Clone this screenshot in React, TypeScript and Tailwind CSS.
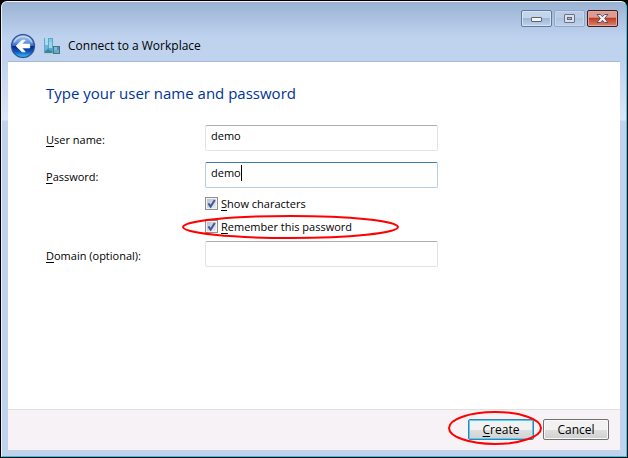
import { useState, type ReactNode } from 'react'
import clsx from 'clsx'

function BackIcon() {
  return (
    <svg width="26" height="26" viewBox="0 0 26 26" aria-hidden="true">
      <defs>
        <linearGradient id="orb" x1="0" y1="0" x2="0" y2="1">
          <stop offset="0" stopColor="#b4cdec" />
          <stop offset="0.3" stopColor="#6f9fdc" />
          <stop offset="0.48" stopColor="#3a6cc0" />
          <stop offset="0.52" stopColor="#062a86" />
          <stop offset="0.75" stopColor="#0f58bd" />
          <stop offset="1" stopColor="#41c4f7" />
        </linearGradient>
      </defs>
      <circle cx="13" cy="13" r="12.5" fill="#a4bddd" />
      <circle cx="13" cy="13" r="11.4" fill="url(#orb)" stroke="#2b4f96" strokeWidth="1.2" />
      <path d="M4 9.5a9.8 9.8 0 0 1 18 0" fill="none" stroke="#e6f0fb" strokeOpacity="0.6" strokeWidth="1.2" />
      <path
        d="M6.2 13 12 7.2h3.2l-3.4 3.9h7.9v3.8h-7.9l3.4 3.9H12Z"
        fill="#fff"
        stroke="#fff"
        strokeWidth="0.8"
        strokeLinejoin="round"
      />
    </svg>
  )
}

function WorkplaceIcon() {
  return (
    <svg width="16" height="16" viewBox="0 0 16 16" aria-hidden="true">
      <rect x="0" y="0" width="9" height="16" fill="#5fa5c8" />
      <rect x="1" y="0" width="3" height="7" fill="#a5dcf0" />
      <rect x="5" y="1" width="3" height="3" fill="#84c6e2" />
      <rect x="5" y="4" width="3" height="6" fill="#9bd5ec" />
      <rect x="1" y="7" width="3" height="5" fill="#70b5d8" />
      <path d="M1 15v-2l2-1 1-2 1 2 3 1v2Z" fill="#3585a3" />
      <rect x="0" y="15" width="9" height="1" fill="#b3cdc2" />
      <rect x="9" y="8" width="7" height="8" fill="#41758f" />
      <rect x="10" y="9" width="3" height="3" fill="#78bedb" />
      <rect x="13" y="9" width="2" height="3" fill="#4f8fb2" />
      <rect x="10" y="12" width="5" height="3" fill="#6fa9bd" />
    </svg>
  )
}

function CaptionButton({ label, className, children }: { label: string; className: string; children: ReactNode }) {
  return (
    <button
      type="button"
      aria-label={label}
      className={clsx('flex h-[17px] w-[31px] items-center justify-center rounded-xs border', className)}
    >
      {children}
    </button>
  )
}

function CaptionButtons() {
  return (
    <div className="flex gap-[2px]">
      <CaptionButton
        label="Minimize"
        className="border-[#61779c] bg-linear-to-b from-[#c3d5ea] from-45% via-[#9db7d4] via-50% to-[#bdd4ee] shadow-[inset_0_0_0_1px_#d5e4f5]"
      >
        <svg width="11" height="11" viewBox="0 0 11 11" aria-hidden="true">
          <rect x="0.5" y="4.5" width="10" height="4" rx="0.5" fill="#f4f5f6" stroke="#5c6270" />
        </svg>
      </CaptionButton>
      <CaptionButton
        label="Maximize"
        className="border-[#8fa8c9] bg-linear-to-b from-[#b8cce6] from-45% via-[#adc4e0] via-50% to-[#bdd1ec] shadow-[inset_0_0_0_1px_#c6d7ee]"
      >
        <svg width="11" height="11" viewBox="0 0 11 11" aria-hidden="true">
          <rect x="0.5" y="1.5" width="10" height="8" rx="0.5" fill="#dcdfe6" stroke="#6b7186" />
          <rect x="3.5" y="4.5" width="4" height="2" fill="#a9bad6" stroke="#5f6580" />
        </svg>
      </CaptionButton>
      <CaptionButton
        label="Close"
        className="border-[#431922] bg-linear-to-b from-[#dd9c91] from-40% via-[#c23c24] via-50% to-[#d9826a] shadow-[inset_0_0_0_1px_#e3a79c]"
      >
        <svg width="13" height="11" viewBox="0 0 13 11" aria-hidden="true">
          <path
            d="M1 1.5h3.3l2.2 2.2 2.2-2.2H12L8.6 5.5 12 9.5H8.7L6.5 7.3 4.3 9.5H1l3.4-4Z"
            fill="#f5f5f6"
            stroke="#535666"
            strokeLinejoin="round"
          />
        </svg>
      </CaptionButton>
    </div>
  )
}

function Field({
  id,
  label,
  value,
  onChange,
  active,
}: {
  id: string
  label: string
  value: string
  onChange: (value: string) => void
  active?: boolean
}) {
  return (
    <div className="flex items-center">
      <label htmlFor={id} className="w-[159px] shrink-0 pt-1">
        <u className="underline-offset-2">{label[0]}</u>
        {label.slice(1)}
      </label>
      <div className="relative w-[233px]">
        <input
          id={id}
          type="text"
          value={value}
          onChange={(e) => onChange(e.target.value)}
          className={clsx(
            'block h-[26px] w-full rounded-xs border bg-white px-[5px] pb-[5px] outline-none',
            active
              ? 'border-[#b5cfe7] border-t-[#3d7bad] caret-transparent'
              : 'border-[#e2e3ea] border-t-[#abadb3]',
          )}
        />
        {active && (
          <span className="pointer-events-none absolute top-0 left-[6px] flex h-[21px] items-center" aria-hidden="true">
            <span className="invisible">{value}</span>
            <span className="h-4 w-px bg-black" />
          </span>
        )}
      </div>
    </div>
  )
}

function CheckField({
  label,
  checked,
  onChange,
  children,
}: {
  label: string
  checked: boolean
  onChange: (checked: boolean) => void
  children?: ReactNode
}) {
  return (
    <div className="relative ml-[159px] flex h-[23px] items-center">
      <label className="flex items-center gap-[3px]">
        <span className="relative size-[13px]">
          <input
            type="checkbox"
            checked={checked}
            onChange={(e) => onChange(e.target.checked)}
            className="block size-[13px] appearance-none border border-[#8e8f8f] bg-linear-to-br from-[#b9bfca] to-[#eef0f3] shadow-[inset_0_0_0_1px_#f4f4f4]"
          />
          {checked && (
            <svg className="pointer-events-none absolute inset-0" width="13" height="13" viewBox="0 0 13 13" aria-hidden="true">
              <path d="M3.4 6.4 5.6 9.6 9.8 3" fill="none" stroke="#3f5a9c" strokeWidth="2" />
            </svg>
          )}
        </span>
        <span>
          <u className="underline-offset-2">{label[0]}</u>
          {label.slice(1)}
        </span>
      </label>
      {children}
    </div>
  )
}

export default function App() {
  const [userName, setUserName] = useState('demo')
  const [password, setPassword] = useState('demo')
  const [domain, setDomain] = useState('')
  const [showCharacters, setShowCharacters] = useState(true)
  const [remember, setRemember] = useState(true)

  return (
    <div className="flex min-h-screen bg-black p-px font-['Open_Sans','Noto_Sans',sans-serif] text-[12px] leading-4 text-black">
      <div className="flex flex-1 flex-col rounded-t-md border border-t-[#f2f6fb] border-r-[#22d3f5] border-b-[#22c8e8] border-l-[#e6f0fb] bg-[linear-gradient(#9ab3d3,#bfd3ef_36px,#bfd3ef_60px,#dbe6f8_118px,#bfd3ef_119px)] px-[6px] pb-[6px]">
        <header className="flex h-[59px] flex-col">
          <div className="flex justify-end pt-2 pr-[2px]">
            <CaptionButtons />
          </div>
          <div className="flex items-center pt-[6px] pl-[2px]">
            <button type="button" aria-label="Back">
              <BackIcon />
            </button>
            <span className="px-2">
              <WorkplaceIcon />
            </span>
            <h1>Connect to a Workplace</h1>
          </div>
        </header>

        <form className="flex flex-1 flex-col border-t border-[#a5b8d8] bg-white" onSubmit={(e) => e.preventDefault()}>
          <div className="flex-1 px-[38px] pt-[19px] text-[11px]">
            <h2 className="text-[15px] leading-6 text-[#003399]">Type your user name and password</h2>
            <div className="mt-5 flex flex-col gap-[11px]">
              <Field id="user" label="User name:" value={userName} onChange={setUserName} />
              <Field id="password" label="Password:" value={password} onChange={setPassword} active />
            </div>
            <div className="pt-1 pb-[3px]">
              <CheckField label="Show characters" checked={showCharacters} onChange={setShowCharacters} />
              <CheckField label="Remember this password" checked={remember} onChange={setRemember}>
                <svg
                  className="pointer-events-none absolute top-0 -left-6"
                  width="218"
                  height="24"
                  viewBox="0 0 218 24"
                  aria-hidden="true"
                >
                  <ellipse cx="109.5" cy="12" rx="107.5" ry="11" fill="none" stroke="#f00" strokeWidth="2" />
                </svg>
              </CheckField>
            </div>
            <Field id="domain" label="Domain (optional):" value={domain} onChange={setDomain} />
          </div>

          <footer className="flex justify-end gap-[9px] border-t border-[#dfdfdf] bg-[#f6f2f6] pt-[9px] pr-[11px] pb-[10px]">
            <div className="relative">
              <button
                type="submit"
                className="block h-[21px] w-[66px] rounded-xs border border-[#3c7fb1] bg-linear-to-b from-[#f2f2f2] from-50% via-[#dedede] via-55% to-[#d0d2d3] shadow-[inset_0_0_0_1px_#4fd0f3]"
              >
                <u className="underline-offset-2">C</u>reate
              </button>
              <svg
                className="pointer-events-none absolute -top-2 -left-5"
                width="94"
                height="34"
                viewBox="0 0 94 34"
                aria-hidden="true"
              >
                <ellipse cx="47" cy="17" rx="46" ry="16" fill="none" stroke="#f00" strokeWidth="2" />
              </svg>
            </div>
            <button
              type="button"
              className="block h-[21px] w-[66px] rounded-xs border border-[#707070] bg-linear-to-b from-[#f2f2f2] from-50% via-[#dedede] via-55% to-[#d0d0d0] shadow-[inset_0_0_0_1px_#fafafa]"
            >
              Cancel
            </button>
          </footer>
        </form>
      </div>
    </div>
  )
}
